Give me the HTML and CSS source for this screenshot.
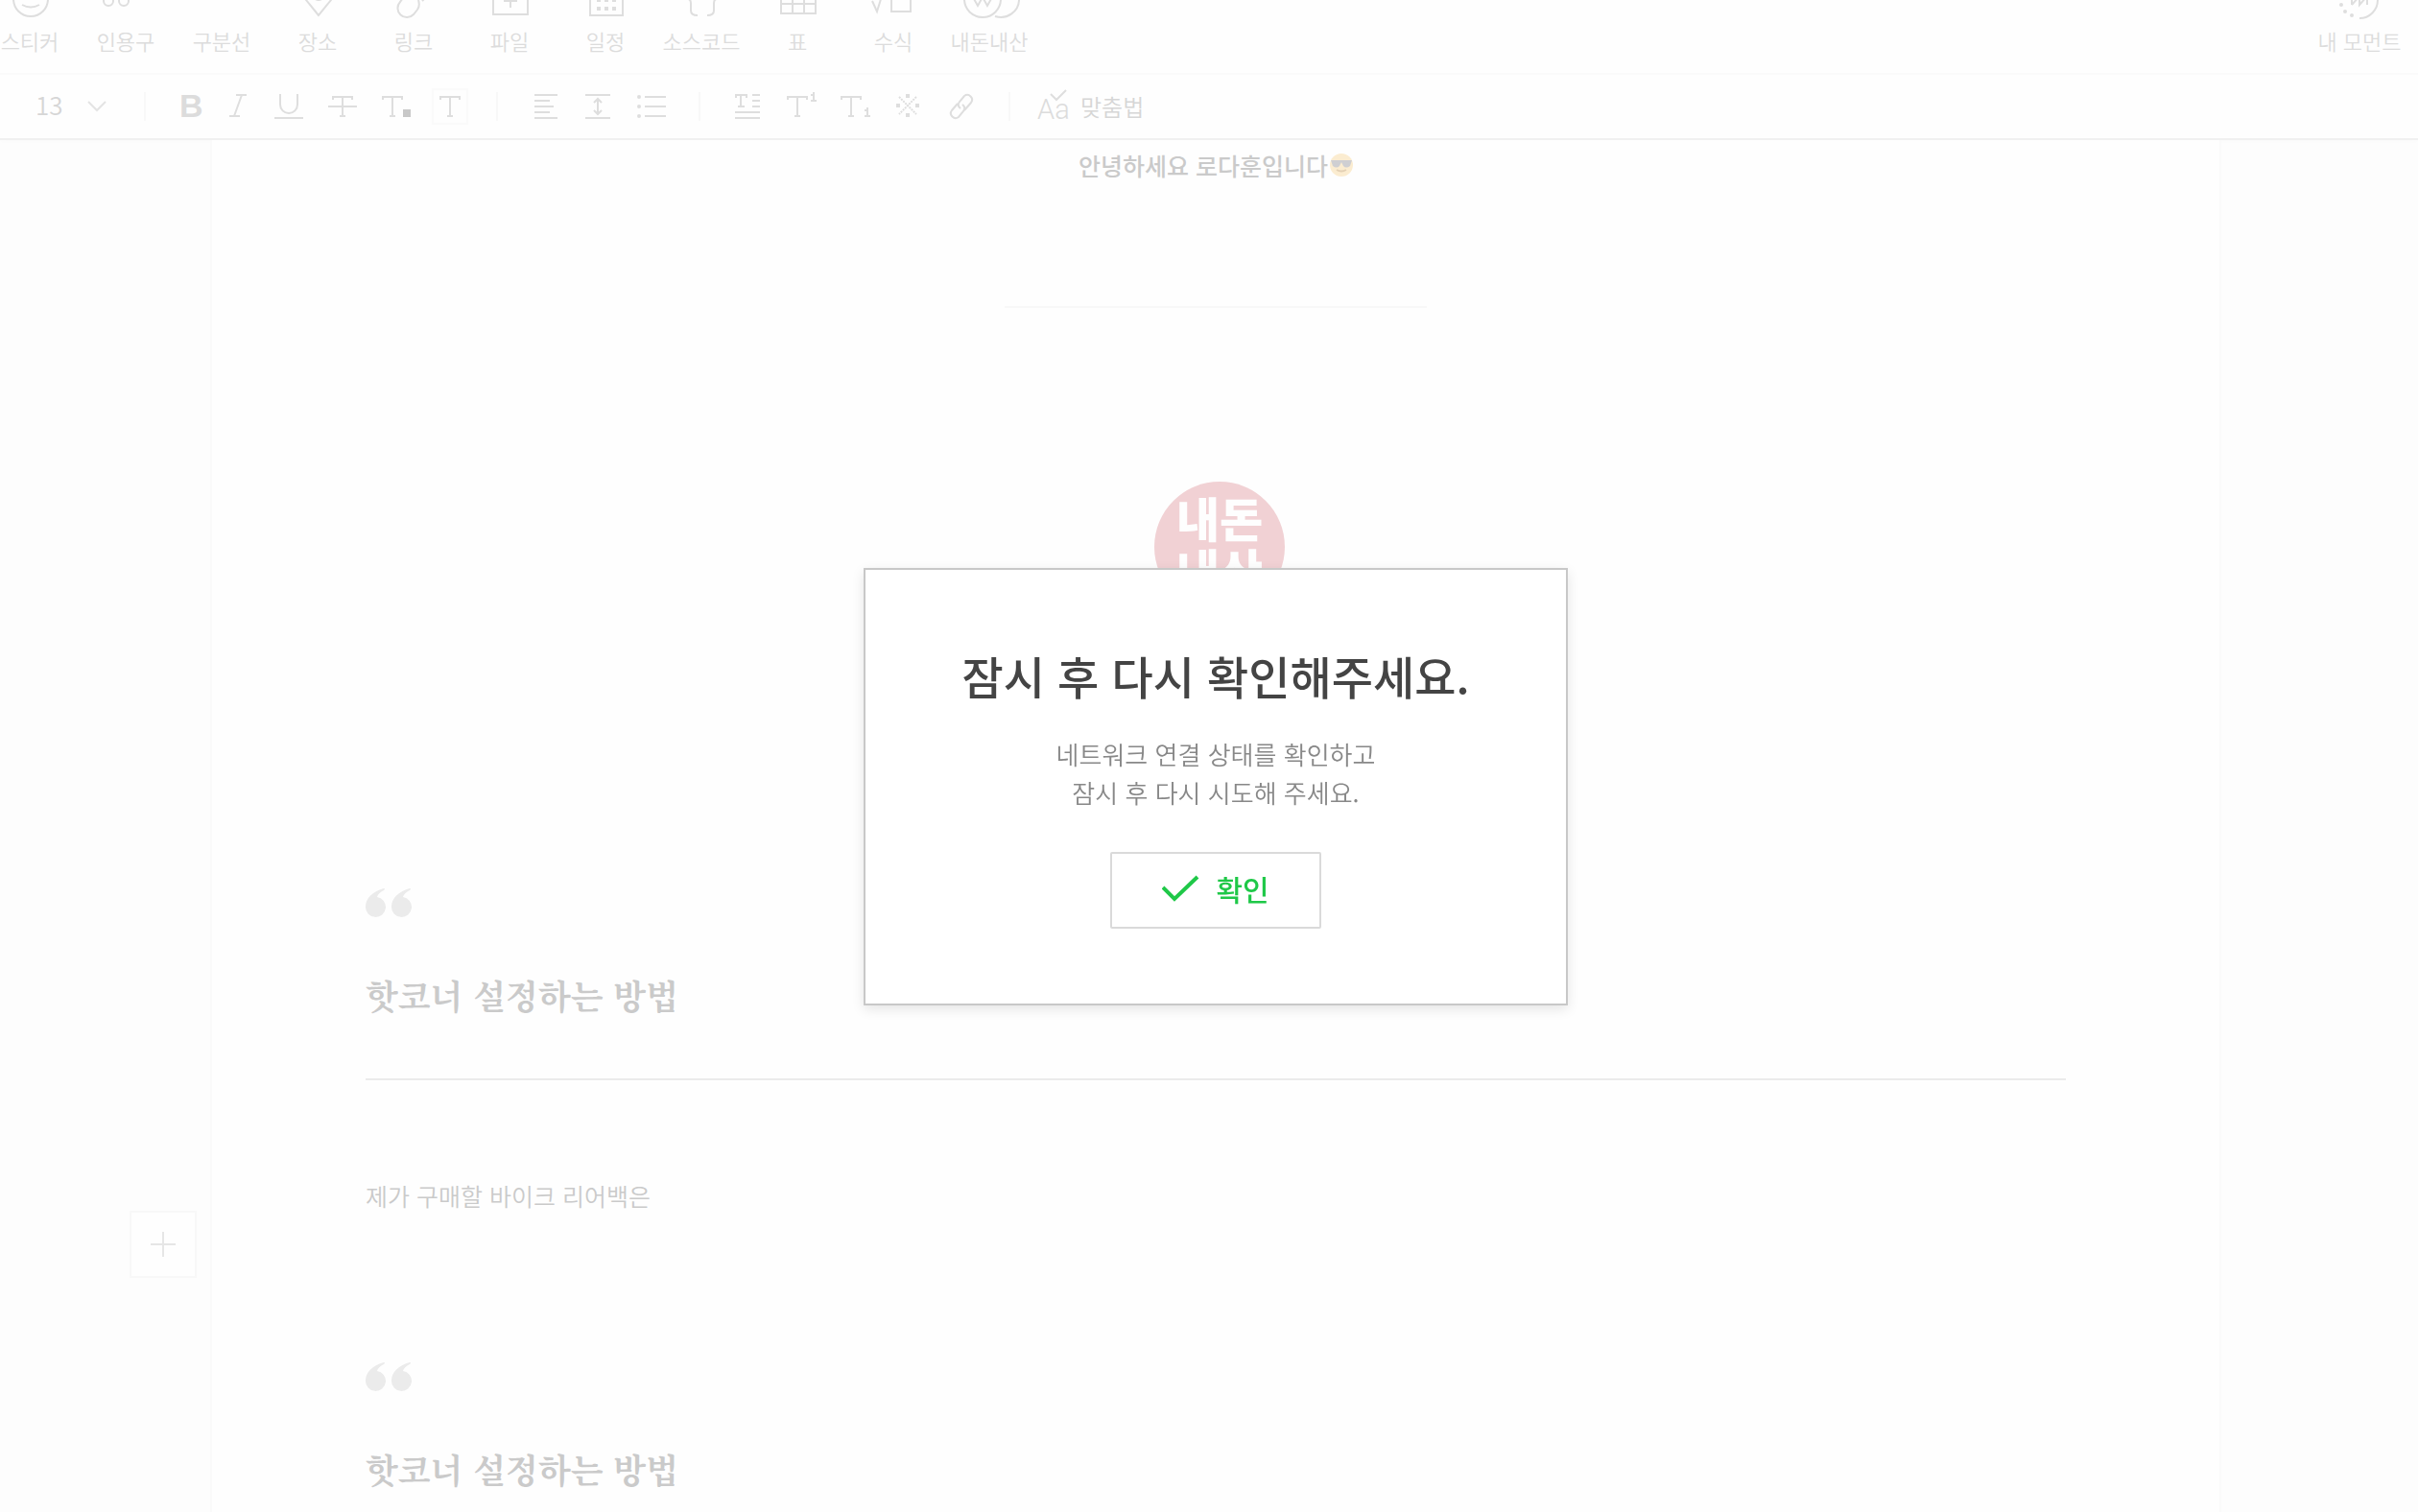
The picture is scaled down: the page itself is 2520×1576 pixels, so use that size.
FILE: index.html
```
<!DOCTYPE html>
<html lang="ko">
<head>
  <meta charset="utf-8">
  <title>글쓰기</title>
  <link rel="stylesheet" href="styles.css">
</head>
<body>
  <header class="header">
    <div class="insert-bar">
      <button class="insert-button">
        <svg class="icon" viewBox="0 0 44 44"><circle cx="23" cy="22" r="18"/><path d="M14 28q9 5 18 0M16 17v3M30 17v3"/></svg>
        스티커
      </button>
      <button class="insert-button">
        <svg class="icon" viewBox="0 0 44 44"><circle cx="4" cy="24" r="5"/><circle cx="20" cy="24" r="5"/><path d="M-1 23q0-8 6-11M15 23q0-8 6-11"/></svg>
        인용구
      </button>
      <button class="insert-button">
        <svg class="icon" viewBox="0 0 44 44"><path d="M4 10h36"/></svg>
        구분선
      </button>
      <button class="insert-button">
        <svg class="icon" viewBox="0 0 44 44"><path d="M23 39L10 23q-3-4-3-8a16 16 0 0 1 32 0q0 4-3 8z"/><circle cx="23" cy="17" r="6"/></svg>
        장소
      </button>
      <button class="insert-button">
        <svg class="icon" viewBox="0 0 44 44"><path d="M15 15L8 25a9 9 0 0 0 14 13l4-5q3-4 1-10M31 24l2-2"/></svg>
        링크
      </button>
      <button class="insert-button">
        <svg class="icon" viewBox="0 0 44 44"><path d="M5 8h36v30H5zM23 16v15M16 24h14"/></svg>
        파일
      </button>
      <button class="insert-button">
        <svg class="icon" viewBox="0 0 44 44"><path d="M6 8h34v31H6z"/><path class="dots" d="M13 21h4v4h-4zM21 21h4v4h-4zM29 21h4v4h-4zM13 30h4v4h-4zM21 30h4v4h-4zM29 30h4v4h-4z"/></svg>
        일정
      </button>
      <button class="insert-button">
        <svg class="icon" viewBox="0 0 44 44"><path d="M18 6q-7 0-7 5v7q0 4-3 4 3 0 3 5v7q0 5 7 5M28 6q7 0 7 5v7q0 4 3 4-3 0-3 5v7q0 5-7 5"/></svg>
        소스코드
      </button>
      <button class="insert-button">
        <svg class="icon" viewBox="0 0 44 44"><path d="M5 8h36v29H5zM17 8v29M29 8v29M5 17h36M5 27h36"/></svg>
        표
      </button>
      <button class="insert-button">
        <svg class="icon" viewBox="0 0 44 44"><path d="M0 24l5 11 9-29h28M20 15h20v20H20z"/></svg>
        수식
      </button>
      <button class="insert-button">
        <svg class="icon" viewBox="0 0 44 44"><circle cx="15" cy="22" r="19"/><path d="M28 40a19 19 0 1 0 0-36M5 20l5 9 5-9 5 9 5-9"/></svg>
        내돈내산
      </button>
      <button class="insert-button moment">
        <svg class="icon" viewBox="0 0 44 44"><path d="M22 4a19 19 0 0 1 0 38M14 28V16M14 28l8-9v9l8-9v9"/><circle class="dots" cx="3" cy="28" r="2"/><circle class="dots" cx="7" cy="35" r="2"/><circle class="dots" cx="14" cy="39" r="2"/></svg>
        내 모먼트
      </button>
    </div>

    <div class="format-bar">
      <div class="font-size">
        <select class="font-size-select" aria-label="글자 크기">
          <option>11</option>
          <option selected>13</option>
          <option>15</option>
          <option>16</option>
        </select>
        <svg class="chevron" viewBox="0 0 20 12"><path d="M1 1l9 9 9-9"/></svg>
      </div>
      <span class="separator"></span>
      <button class="tool narrow" aria-label="굵게">
        <svg class="icon" viewBox="0 0 44 44"><text class="bold-letter" x="11" y="33">B</text></svg>
      </button>
      <button class="tool narrow" aria-label="기울임꼴">
        <svg class="icon" viewBox="0 0 44 44"><path d="M20 10h11M13 32h11M26 10l-8 22"/></svg>
      </button>
      <button class="tool" aria-label="밑줄">
        <svg class="icon" viewBox="0 0 44 44"><path d="M13 9v11a9 9 0 0 0 18 0V9M7 34h30"/></svg>
      </button>
      <button class="tool" aria-label="취소선">
        <svg class="icon" viewBox="0 0 44 44"><path d="M12 15v-3h20v3M22 12v20M19 32h6M7 22h30"/></svg>
      </button>
      <button class="tool" aria-label="글자색">
        <svg class="icon" viewBox="0 0 44 44"><path d="M8 15v-3h20v3M18 12v20M15 32h6"/><path class="swatch" d="M29 25h8v8h-8z"/></svg>
      </button>
      <button class="tool" aria-label="글자 배경색">
        <svg class="icon" viewBox="0 0 44 44"><path class="swatch-box" d="M4 4h36v36H4z"/><path d="M12 15v-3h20v3M22 12v20M19 32h6"/></svg>
      </button>
      <span class="separator"></span>
      <button class="tool" aria-label="정렬">
        <svg class="icon" viewBox="0 0 44 44"><path d="M11 10h24M11 16h16M11 22h20M11 28h16M11 34h24"/></svg>
      </button>
      <button class="tool" aria-label="줄 간격">
        <svg class="icon" viewBox="0 0 44 44"><path d="M8 10h26M8 34h26M21 14v16M17 18l4-4 4 4M17 26l4 4 4-4"/></svg>
      </button>
      <button class="tool" aria-label="목록">
        <svg class="icon" viewBox="0 0 44 44"><path d="M14 12h22M14 22h22M14 32h22"/><circle class="dots" cx="8" cy="12" r="1"/><circle class="dots" cx="8" cy="22" r="1"/><circle class="dots" cx="8" cy="32" r="1"/></svg>
      </button>
      <span class="separator"></span>
      <button class="tool" aria-label="문단 서식">
        <svg class="icon" viewBox="0 0 44 44"><path d="M10 13v-3h11v3M15 10v12M12 22h7M27 10h8M27 16h8M27 22h8M9 28h26M9 34h26"/></svg>
      </button>
      <button class="tool" aria-label="위 첨자">
        <svg class="icon" viewBox="0 0 44 44"><path d="M8 15v-3h20v3M18 12v20M15 32h6M32 10h3M35 7v9M32 16h6"/></svg>
      </button>
      <button class="tool" aria-label="아래 첨자">
        <svg class="icon" viewBox="0 0 44 44"><path d="M8 15v-3h20v3M18 12v20M15 32h6M32 26h3M35 23v9M32 32h6"/></svg>
      </button>
      <button class="tool" aria-label="특수문자">
        <svg class="icon" viewBox="0 0 44 44"><path stroke-dasharray="2 1" d="M12 12l18 18M30 12L12 30"/><path class="marks" d="M19 9h4v4h-4zM19 29h4v4h-4zM9 19h4v4H9zM29 19h4v4h-4z"/></svg>
      </button>
      <button class="tool" aria-label="링크">
        <svg class="icon" viewBox="0 0 44 44"><path d="M17 19l-6 7a5 5 0 0 0 7 7l5-6q3-4-1-7M24 26l7-8a5 5 0 0 0-7-7l-5 6q-3 4 1 7"/></svg>
      </button>
      <span class="separator"></span>
      <button class="spell-button">
        <svg class="icon" viewBox="0 0 44 44"><text class="thin-letter" x="7" y="35">Aa</text><path d="M21 9l6 6L37 5"/></svg>
        맞춤법
      </button>
    </div>
  </header>

  <main class="workspace">
    <article class="sheet">
      <p class="intro">안녕하세요 로다훈입니다<svg class="emoji" viewBox="0 0 24 24"><circle class="face" cx="12" cy="12" r="12"/><path class="glasses" d="M1 7h22l-2 6q-4 3-7 0l-2-4-2 4q-3 3-7 0z"/><path class="mouth" d="M7 17q5 3 10 0"/></svg></p>
      <hr class="divider">
      <svg class="stamp" viewBox="0 0 144 136">
        <circle cx="76" cy="68" r="68"/>
        <text x="76" y="58">내돈</text>
        <text x="76" y="112">내산</text>
      </svg>
      <section class="quote">
        <svg class="quote-mark" viewBox="0 0 48 32"><path id="mark" d="M19 1C8 4 0 11 0 20a10.500 10.500 0 1 0 12-10q1-4 7-7 2-2 0-2z"/><use href="#mark" x="27"/></svg>
        <h2 class="quote-title">핫코너 설정하는 방법</h2>
      </section>
      <p class="paragraph">제가 구매할 바이크 리어백은</p>
      <section class="quote">
        <svg class="quote-mark" viewBox="0 0 48 32"><use href="#mark"/><use href="#mark" x="27"/></svg>
        <h2 class="quote-title">핫코너 설정하는 방법</h2>
      </section>
    </article>
    <button class="add-button" aria-label="추가">
      <svg class="icon" viewBox="0 0 44 44"><path d="M22 9v26M9 22h26"/></svg>
    </button>
  </main>

  <div class="overlay">
    <div class="popup" role="alertdialog" aria-labelledby="popup-title">
      <h1 class="popup-title" id="popup-title">잠시 후 다시 확인해주세요.</h1>
      <p class="popup-text">네트워크 연결 상태를 확인하고<br>잠시 후 다시 시도해 주세요.</p>
      <button class="confirm-button">
        <svg class="check" viewBox="0 0 40 28"><path d="M1 13l12 12L37 2"/></svg>
        확인
      </button>
    </div>
  </div>
</body>
</html>
```
FILE: styles.css
```
* {
  box-sizing: border-box;
}

body {
  margin: 0;
  height: 100vh;
  display: flex;
  flex-direction: column;
  overflow: hidden;
  background-color: #fdfdfd;
  color: #cacaca;
  font-family: "Noto Sans CJK KR", sans-serif;
}

button,
select {
  font: inherit;
  color: inherit;
  background: none;
  border: 0;
  padding: 0;
  margin: 0;
  cursor: pointer;
}

h1,
h2,
p {
  margin: 0;
}

.icon {
  display: block;
  width: 44px;
  height: 44px;
  fill: none;
  stroke: #dedede;
  stroke-width: 2;
  overflow: visible;
}

.icon .dots {
  fill: #dedede;
}

.icon .marks {
  fill: #dedede;
  stroke: none;
}

.insert-bar .dots {
  stroke: none;
}

/* top bars */
.header {
  flex: none;
  margin-top: -32px;
  background-color: #fefefe;
  border-bottom: 2px solid #f0f0f0;
  box-shadow: 0 2px 6px rgba(0, 0, 0, 0.01);
}

.insert-bar {
  display: flex;
  margin-left: -19px;
  padding: 9px 11px 22px 0;
  border-bottom: 2px solid #fafafa;
}

.insert-button {
  display: flex;
  flex-direction: column;
  align-items: center;
  gap: 9px;
  width: 100px;
  font-size: 22px;
  font-weight: 350;
  line-height: 24px;
  color: #dcdcdc;
  white-space: nowrap;
}

.moment {
  margin-left: auto;
}

.format-bar {
  display: flex;
  align-items: center;
  height: 66px;
  font-size: 24px;
  font-weight: 350;
}

.font-size {
  position: relative;
  width: 130px;
}

.font-size-select {
  appearance: none;
  width: 100%;
  padding: 0 0 4px 37px;
  color: #d6d6d6;
  font-size: 26px;
  line-height: 36px;
}

.chevron {
  position: absolute;
  top: 14px;
  right: 19px;
  width: 20px;
  height: 12px;
  fill: none;
  stroke: #e4e4e4;
  stroke-width: 2;
  pointer-events: none;
}

.separator {
  width: 2px;
  height: 30px;
  margin: 0 21px 0 20px;
  background-color: #f8f8f8;
}

.tool {
  display: flex;
  justify-content: center;
  width: 56px;
}

.narrow {
  width: 50px;
}

.bold-letter,
.thin-letter {
  fill: #dcdcdc;
  stroke: none;
}

.bold-letter {
  font-family: "Liberation Sans", sans-serif;
  font-size: 34px;
  font-weight: bold;
}

.thin-letter {
  font-family: Roboto, sans-serif;
  font-size: 29px;
  font-weight: 300;
}

.icon .swatch {
  fill: #c8c8c8;
  stroke: none;
}

.icon .swatch-box {
  stroke: #fafafa;
}

.spell-button {
  display: flex;
  align-items: center;
  gap: 8px;
  color: #d6d6d6;
  line-height: 36px;
}

/* editor */
.workspace {
  position: relative;
  flex: 1;
  display: flex;
  min-height: 0;
}

.sheet {
  flex: 1;
  margin: 0 205px 0 219px;
  padding: 6px 160px 0;
  background-color: #fefefe;
  border: solid #fafafa;
  border-width: 0 2px;
  font-size: 25px;
  line-height: 40px;
  overflow: hidden;
}

.intro {
  display: flex;
  justify-content: center;
  align-items: center;
  gap: 2px;
  font-weight: 500;
}

.emoji {
  width: 24px;
  height: 24px;
}

.face {
  fill: #fbecd0;
}

.glasses {
  fill: #cfcfd2;
}

.mouth {
  fill: none;
  stroke: #e3d0b4;
  stroke-width: 2;
}

.divider {
  width: 440px;
  height: 2px;
  margin: 127px auto 181px;
  border: 0;
  background-color: #f8f8f8;
}

.stamp {
  display: block;
  width: 144px;
  height: 136px;
  margin: 0 auto 287px;
  fill: #f1d1d4;
}

.stamp text {
  fill: #fefefe;
  font-size: 49px;
  font-weight: 900;
  text-anchor: middle;
}

.quote {
  padding-bottom: 61px;
  border-bottom: 2px solid #ebebeb;
}

.quote-mark {
  display: block;
  width: 48px;
  height: 32px;
  fill: #ebebeb;
}

.quote-title {
  margin-top: 54px;
  font-family: "Nanum Myeongjo", "Noto Serif CJK KR", "Noto Sans CJK KR", serif;
  font-size: 35px;
  line-height: 52px;
}

.paragraph {
  margin: 100px 0 153px;
  font-weight: 350;
}

.add-button {
  position: absolute;
  left: 135px;
  top: 1116px;
  display: flex;
  justify-content: center;
  align-items: center;
  width: 70px;
  height: 70px;
  background-color: #fefefe;
  border: 2px solid #f8f8f8;
}

.add-button .icon {
  stroke: #e6e6e6;
}

/* popup */
.overlay {
  position: fixed;
  inset: 0;
  display: flex;
  justify-content: center;
  align-items: center;
  padding: 64px 0 0 14px;
}

.popup {
  width: 734px;
  padding: 74px 40px 78px;
  background-color: #fff;
  border: 2px solid #c8c8c8;
  box-shadow: 0 4px 12px rgba(0, 0, 0, 0.1);
  text-align: center;
}

.popup-title {
  color: #444;
  font-size: 47px;
  font-weight: 500;
  line-height: 72px;
}

.popup-text {
  margin: 26px 0 42px;
  color: #888;
  font-size: 26px;
  font-weight: 350;
  line-height: 40px;
}

.confirm-button {
  display: flex;
  justify-content: center;
  align-items: center;
  gap: 16px;
  width: 220px;
  height: 80px;
  margin: 0 auto;
  padding-bottom: 4px;
  border: 2px solid #dadada;
  border-radius: 2px;
  color: #1fc848;
  font-size: 30px;
  font-weight: 500;
}

.check {
  width: 40px;
  height: 28px;
  fill: none;
  stroke: #1fc848;
  stroke-width: 4;
}
```
